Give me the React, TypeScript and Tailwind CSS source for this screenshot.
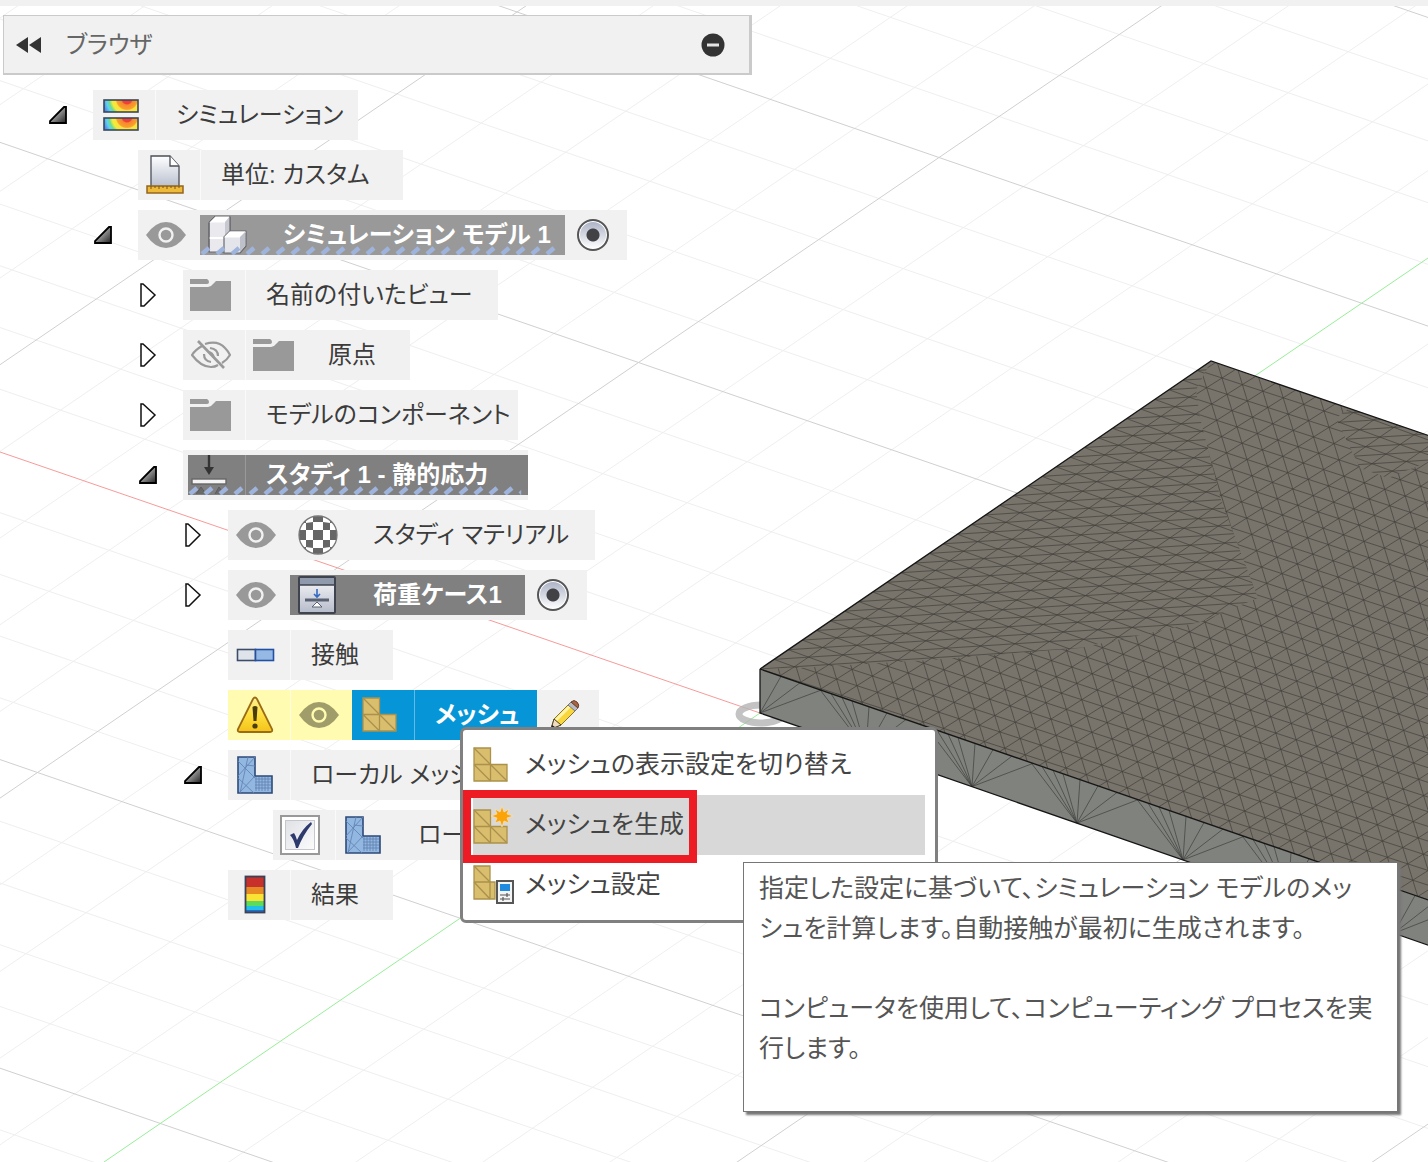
import React from 'react';
import { clsx } from 'clsx';

type Point = [number, number];

// Ground grid: origin of the model and the two cell vectors
const ORIGIN: Point = [760, 713];
const GRID_U: Point = [84.4, 29.1];
const GRID_V: Point = [60.1, -41];

const parallelLines = (
  origin: Point,
  dir: Point,
  step: Point,
  from: number,
  to: number,
  keep: (k: number) => boolean = () => true,
) => {
  let d = '';
  for (let k = from; k <= to; k++) {
    if (!keep(k)) continue;
    const x = origin[0] + step[0] * k;
    const y = origin[1] + step[1] * k;
    d += `M${(x - dir[0] * 80).toFixed(1)} ${(y - dir[1] * 80).toFixed(1)}L${(x + dir[0] * 80).toFixed(1)} ${(y + dir[1] * 80).toFixed(1)}`;
  }
  return d;
};

const triangleLattice = (origin: Point, a: Point, b: Point, diagonal: Point) =>
  parallelLines(origin, a, b, -80, 80) +
  parallelLines(origin, b, a, -80, 80) +
  parallelLines(origin, diagonal, a, -80, 80);

const isMajor = (k: number) => k % 5 === 0 && k !== 0;
const isMinor = (k: number) => k % 5 !== 0;

const minorGrid =
  parallelLines(ORIGIN, GRID_U, GRID_V, -30, 30, isMinor) + parallelLines(ORIGIN, GRID_V, GRID_U, -30, 30, isMinor);
const majorGrid =
  parallelLines(ORIGIN, GRID_U, GRID_V, -30, 30, isMajor) + parallelLines(ORIGIN, GRID_V, GRID_U, -30, 30, isMajor);

const regularMesh = triangleLattice([760, 669], [20.4, 6.6], [5, 16.3], [15.4, -9.7]);
const slantedMesh = triangleLattice([760, 669], [20.3, 7.4], [14.1, -9.63], [34.4, -2.23]);

const topEdgeY = (x: number) => 669 + (x - 760) * 0.3458;
const bottomEdgeY = (x: number) => 713 + (x - 760) * 0.3473;
const sideFans = [760, 866, 972, 1077, 1183, 1288, 1394]
  .map((x) =>
    [-46, -35, -24, -14, 3, 21, 40, 61]
      .filter((offset) => x + offset > 765)
      .map((offset) => `M${x} ${bottomEdgeY(x).toFixed(1)}L${x + offset} ${topEdgeY(x + offset).toFixed(1)}`)
      .join(''),
  )
  .join('');

const Viewport = () => (
  <svg className="absolute top-0 left-0" width="1920" height="1400" aria-hidden="true">
    <defs>
      <clipPath id="plate-top">
        <path d="M760 669L1211 361L1920 604L1920 1070Z" />
      </clipPath>
      <clipPath id="slanted">
        <path d="M760 669L1211 361L1196 390L1200 418L1221 500L1258 598L1200 622L1080 648L930 660L800 668Z M1336 418L1350 408L1428 436V462L1388 478L1360 468Z" />
      </clipPath>
      <clipPath id="regular">
        <path d="M760 669L800 668L930 660L1080 648L1200 622L1258 598L1221 500L1200 418L1196 390L1211 361L1350 408L1336 418L1360 468L1388 478L1428 462L1920 604V1070Z" />
      </clipPath>
    </defs>
    <path d={minorGrid} stroke="#efefef" strokeWidth="1" />
    <path d={majorGrid} stroke="#d0d0d0" strokeWidth="1" />
    <path d="M0 452L760 713" stroke="#f79a9a" strokeWidth="1" />
    <path d="M104 1162L760 713L1428 258L1920 -78" stroke="#98ee98" strokeWidth="1" fill="none" />
    <ellipse cx="761" cy="714" rx="22" ry="9" fill="none" stroke="#b4b4b4" strokeWidth="7" opacity="0.8" />

    <path d="M760 669V713L1920 1116V1070Z" fill="#80827e" />
    <path d={sideFans} stroke="#3d3f3c" strokeWidth="0.7" />
    <path d="M760 669L1211 361L1920 604L1920 1070Z" fill="#78746c" />
    <g clipPath="url(#plate-top)" stroke="#35332f" strokeWidth="0.7" opacity="0.8">
      <path d={regularMesh} clipPath="url(#regular)" />
      <path d={slantedMesh} clipPath="url(#slanted)" />
    </g>
    <path d="M760 669V713L1920 1116M760 669L1920 1070M760 669L1211 361L1920 604" fill="none" stroke="#161616" strokeWidth="1.3" />
  </svg>
);

/* ---------- icons ---------- */

const EyeIcon = ({ dark = false }: { dark?: boolean }) => (
  <svg width="40" height="28" viewBox="0 0 40 28">
    <path d="M0 14Q9 1 20 1T40 14Q31 27 20 27T0 14Z" fill={dark ? '#a09d6b' : '#999999'} />
    <circle cx="20" cy="14" r="6.5" fill="none" stroke={dark ? '#fffbb0' : '#f1f1f1'} strokeWidth="2.4" />
  </svg>
);

const HiddenEyeIcon = () => (
  <svg width="40" height="30" viewBox="0 0 40 30" fill="none" stroke="#999999" strokeWidth="2.2">
    <path d="M11 6Q4 10 1 15Q10 27 20 27Q24 27 27 25M14 4Q27 0 34 8Q37 11 39 15Q36 20 31 23" />
    <path d="M13 14Q13 21 20 22M19 8Q27 9 27 16" />
    <path d="M17 12Q22 12 23 18" strokeWidth="1.8" />
    <path d="M7 1L33 28" strokeWidth="2.6" />
  </svg>
);

const FolderIcon = () => (
  <svg width="42" height="34" viewBox="0 0 42 34" fill="#999999">
    <path d="M0 1H17Q19 2 19 4T17 6H0Z" />
    <path d="M0 9H18Q21 9 23 6L26 3H41V33H0Z" />
  </svg>
);

const SimulationIcon = () => (
  <svg width="36" height="32" viewBox="0 0 36 32">
    <defs>
      <radialGradient id="sim-heat" gradientUnits="userSpaceOnUse" cx="24" cy="0" r="24">
        <stop offset="0.2" stopColor="#ee4037" />
        <stop offset="0.25" stopColor="#f7882f" />
        <stop offset="0.43" stopColor="#f9a02c" />
        <stop offset="0.48" stopColor="#fbe33c" />
        <stop offset="0.62" stopColor="#f4ea3d" />
        <stop offset="0.74" stopColor="#6fdc8c" />
        <stop offset="0.85" stopColor="#5fd3f0" />
        <stop offset="1" stopColor="#4f8df0" />
      </radialGradient>
    </defs>
    <rect x="1" y="1" width="34" height="12" fill="url(#sim-heat)" stroke="#3c4658" strokeWidth="1.6" />
    <g transform="translate(0 18)">
      <rect x="1" y="1" width="34" height="12" fill="url(#sim-heat)" stroke="#3c4658" strokeWidth="1.6" />
    </g>
  </svg>
);

const UnitsIcon = () => (
  <svg width="38" height="40" viewBox="0 0 38 40">
    <defs>
      <linearGradient id="paper" x1="0" y1="0" x2="0" y2="1">
        <stop offset="0" stopColor="#ffffff" />
        <stop offset="1" stopColor="#b8bfce" />
      </linearGradient>
    </defs>
    <path d="M5 1H24L33 11V32H5Z" fill="url(#paper)" stroke="#4b5058" strokeWidth="1.3" />
    <path d="M24 1V11H33" fill="#fff" stroke="#4b5058" strokeWidth="1.3" />
    <rect x="1" y="31" width="36" height="7" fill="#edba3a" stroke="#94651c" strokeWidth="1.5" />
    <path d="M5 31V34M9 31V33M13 31V34M17 31V33M21 31V34M25 31V33M29 31V34M33 31V33" stroke="#7c5214" />
  </svg>
);

const CubesIcon = () => (
  <svg width="40" height="40" viewBox="0 0 40 40" stroke="#6a6a70" strokeWidth="1.2" strokeLinejoin="round">
    <path d="M1 7L7 1H22V31L17 37H1Z" fill="#e9e9ee" />
    <path d="M1 7L7 1H22L17 7Z" fill="#fff" stroke="#fff" />
    <path d="M17 7V37L22 31V1Z" fill="#c7c8d0" stroke="none" />
    <path d="M1 23H17" stroke="#fff" strokeWidth="2" />
    <path d="M1 37V7L7 1H22V18" fill="none" />
    <path d="M16 22L22 16H38V31L32 38H16Z" fill="#e4e5ea" />
    <path d="M17 22L22 17H37L32 22Z" fill="#fff" stroke="#fff" />
    <path d="M32 22V37L37 31V17Z" fill="#bfc1ca" stroke="none" />
  </svg>
);

const StaticStressIcon = () => (
  <svg width="38" height="40" viewBox="0 0 38 40">
    <path d="M19 0V14" stroke="#333" strokeWidth="2.4" />
    <path d="M14 12H24L19 20Z" fill="#333" />
    <rect x="2" y="24" width="34" height="5" fill="#f4f4f4" stroke="#666" strokeWidth="1.4" />
    <path d="M6 39L11 32L16 39M25 39L29 32L34 39" fill="#6a6a6a" stroke="#5c5c5c" />
  </svg>
);

const MaterialIcon = () => (
  <svg width="40" height="40" viewBox="0 0 40 40">
    <defs>
      <clipPath id="ball">
        <circle cx="20" cy="20" r="19" />
      </clipPath>
    </defs>
    <circle cx="20" cy="20" r="19" fill="#fff" />
    <g clipPath="url(#ball)" fill="#666666">
      <path d="M15 0H25V7H15ZM0 15H8V25H0ZM15 15H25V25H15ZM32 15H40V25H32ZM15 33H25V40H15Z" />
      <path d="M8 8L15 7V15H8ZM25 7L32 8V15H25ZM8 25H15V33L8 32ZM25 25H32V32L25 33Z" />
      <path d="M4 4H8V8H4ZM32 4H36V8H32ZM4 32H8V36H4ZM32 32H36V36H32Z" />
    </g>
    <circle cx="20" cy="20" r="19" fill="none" stroke="#777" strokeWidth="1.3" />
  </svg>
);

const LoadCaseIcon = () => (
  <svg width="38" height="38" viewBox="0 0 38 38">
    <defs>
      <linearGradient id="load" x1="0" y1="0" x2="0" y2="1">
        <stop offset="0" stopColor="#fafafc" />
        <stop offset="1" stopColor="#b5bbc9" />
      </linearGradient>
    </defs>
    <rect x="1" y="1" width="36" height="36" rx="1" fill="url(#load)" stroke="#3e434d" strokeWidth="2" />
    <rect x="2" y="2" width="34" height="7" fill="#8f9bad" />
    <path d="M2 9H36" stroke="#3e434d" strokeWidth="1.6" />
    <path d="M19 13V20M16 18L19 21L22 18" fill="none" stroke="#3568c0" strokeWidth="1.6" />
    <path d="M7 24H31" stroke="#596173" strokeWidth="3" />
    <path d="M19 26L24 31H14Z" fill="#fff" stroke="#596173" />
  </svg>
);

const ContactIcon = () => (
  <svg width="40" height="14" viewBox="0 0 40 14">
    <rect x="1.5" y="1.5" width="18" height="11" fill="#dfe4ea" stroke="#3c4d6c" strokeWidth="1.6" />
    <rect x="19.5" y="1.5" width="18" height="11" fill="#96b8e4" stroke="#2450a4" strokeWidth="1.6" />
  </svg>
);

const WarningIcon = () => (
  <svg width="38" height="38" viewBox="0 0 38 38">
    <defs>
      <linearGradient id="warn" x1="0" y1="0" x2="0" y2="1">
        <stop offset="0" stopColor="#fff09a" />
        <stop offset="0.5" stopColor="#ffdf3c" />
        <stop offset="1" stopColor="#f3c21a" />
      </linearGradient>
    </defs>
    <path d="M17 3Q19 0 21 3L36 33Q37 36 34 36H4Q1 36 2 33Z" fill="url(#warn)" stroke="#9a6b14" strokeWidth="1.8" />
    <path d="M16.5 11Q19 9 21.5 11L20.5 25H17.5Z" fill="#4a3d0c" />
    <circle cx="19" cy="30" r="2.6" fill="#4a3d0c" />
  </svg>
);

const MeshShape = () => (
  <g fill="#d8be6d" stroke="#ab914b" strokeWidth="1.3">
    <path d="M1 1H17.5V17.5H34V34H1Z" />
    <path d="M1 17.5H17.5V34M1 1L17.5 17.5L34 34M1 17.5L17.5 34" fill="none" />
  </g>
);

const MeshIcon = () => (
  <svg width="36" height="36" viewBox="0 0 36 36">
    <MeshShape />
  </svg>
);

const GenerateMeshIcon = () => (
  <svg width="40" height="38" viewBox="0 0 40 38">
    <g transform="translate(0 3)">
      <MeshShape />
    </g>
    <path
      d="M29 0L31 6L36 3L34 8L40 10L34 12L36 17L31 15L29 21L27 15L22 17L24 12L18 10L24 8L22 3L27 6Z"
      fill="#faa40a"
      stroke="#f6e3b8"
      strokeWidth="0.7"
    />
  </svg>
);

const MeshSettingsIcon = () => (
  <svg width="42" height="40" viewBox="0 0 42 40">
    <g fill="#d8be6d" stroke="#ab914b" strokeWidth="1.3">
      <path d="M1 1H17V17H22V34H1Z" />
      <path d="M1 17H17V34M1 1L17 17M1 17L17 34" fill="none" />
    </g>
    <rect x="24" y="16" width="16" height="22" fill="#f4f4f4" stroke="#565656" strokeWidth="2" />
    <rect x="27" y="19" width="10" height="7" fill="#1e8be0" />
    <path d="M27 30H37M27 34H37M34 28V32M30 32V36" stroke="#555" strokeWidth="1.2" />
  </svg>
);

const LocalMeshIcon = () => (
  <svg width="38" height="38" viewBox="0 0 38 38">
    <path d="M2 1H19V20H36V37H2Z" fill="#92b7e1" stroke="#2c4a78" strokeWidth="1.6" />
    <path d="M2 20L19 1M2 5L19 22M12 1L4 37M4 36L19 20M2 22L18 37M10 9L19 10" fill="none" stroke="#6486b5" strokeWidth="0.9" />
    <path d="M19 23H35M19 26H35M19 29H35M19 32H35M20 21V35M23 21V35M26 21V35M29 21V35M32 21V35" stroke="#5f80ad" strokeWidth="0.8" />
  </svg>
);

const PencilIcon = () => (
  <svg width="32" height="32" viewBox="0 0 32 32">
    <path d="M2 30L5 20L21 4L28 10L12 26Z" fill="#f8d63c" stroke="#8a7428" strokeWidth="1" />
    <path d="M7 21L22 6" stroke="#fff3a8" strokeWidth="3" />
    <path d="M19 6L22 3L29 9L26 12Z" fill="#b8bcc2" stroke="#777" />
    <path d="M22 3Q25 0 28 3T29 9Z" fill="#a76545" stroke="#6e3f28" />
    <path d="M2 30L5 20L12 26Z" fill="#f0dcc0" stroke="#4f4222" />
    <path d="M2 30L3 26L6 28Z" fill="#222" />
  </svg>
);

const ResultIcon = () => (
  <svg width="22" height="40" viewBox="0 0 22 40">
    <rect x="1" y="1" width="20" height="11" fill="#c8302c" />
    <rect x="1" y="12" width="20" height="7" fill="#e78a23" />
    <rect x="1" y="19" width="20" height="7" fill="#fbe334" />
    <rect x="1" y="26" width="20" height="5" fill="#5ddc5c" />
    <rect x="1" y="31" width="20" height="4" fill="#1fc0ec" />
    <rect x="1" y="35" width="20" height="3" fill="#2b6cc0" />
    <rect x="1.5" y="1.5" width="19" height="36" fill="none" stroke="#3b4258" strokeWidth="1.8" />
  </svg>
);

const Twisty = ({ open }: { open: boolean }) =>
  open ? (
    <svg width="20" height="20" viewBox="0 0 20 20">
      <defs>
        <linearGradient id="twisty" x1="0" y1="0" x2="1" y2="1">
          <stop offset="0.3" stopColor="#b4b4b4" />
          <stop offset="1" stopColor="#222222" />
        </linearGradient>
      </defs>
      <path d="M2 18V16L16 2H18V18Z" fill="url(#twisty)" stroke="#000" strokeWidth="1.8" />
    </svg>
  ) : (
    <svg width="20" height="26" viewBox="0 0 20 26">
      <path d="M3 2H5L17 13L6 24H3Z" fill="#fff" stroke="#111" strokeWidth="1.5" />
    </svg>
  );

/* Blue diagonal dashes that run under an active node */
const Hatch = () => (
  <svg className="absolute bottom-0 left-0 h-[9px] w-full" aria-hidden="true">
    <defs>
      <pattern id="hatch" width="15" height="9" patternUnits="userSpaceOnUse">
        <path d="M2 8L9 2" stroke="#9fb4dc" strokeWidth="4.4" />
      </pattern>
    </defs>
    <rect width="98%" height="9" fill="url(#hatch)" />
  </svg>
);

/* ---------- tree ---------- */

const INDENT = ['pl-12', 'pl-[93px]', 'pl-[138px]', 'pl-[183px]', 'pl-[228px]'];

interface RowProps {
  level: number;
  open?: boolean;
  children: React.ReactNode;
}

const Row: React.FC<RowProps> = ({ level, open, children }) => (
  <li className={clsx('flex h-[50px]', INDENT[level])} role="treeitem" aria-selected={false} aria-expanded={open}>
    {open === undefined ? (
      <span className="w-[45px] shrink-0" />
    ) : (
      <button type="button" aria-label={open ? '折りたたむ' : '展開'} className="flex w-[45px] shrink-0 items-center">
        <Twisty open={open} />
      </button>
    )}
    <div className="flex bg-[#f1f1f1]">{children}</div>
  </li>
);

const Cell = ({ className = 'pl-2', children }: { className?: string; children: React.ReactNode }) => (
  <span className={clsx('flex w-[62px] shrink-0 items-center', className)}>{children}</span>
);

const EyeButton = ({ label, dark }: { label: string; dark?: boolean }) => (
  <button
    type="button"
    aria-label={label}
    className={clsx('flex w-[62px] shrink-0 items-center pl-2', dark && 'border-l border-[#fffde0] bg-[#fffbb0]')}
  >
    <EyeIcon dark={dark} />
  </button>
);

const Label = ({ className, children }: { className?: string; children: React.ReactNode }) => (
  <span className={clsx('flex items-center border-l pl-5 whitespace-nowrap', className)}>{children}</span>
);

const Radio = ({ label }: { label: string }) => (
  <span className="flex w-[62px] items-center pl-3">
    <input
      type="radio"
      aria-label={label}
      defaultChecked
      className="size-8 appearance-none rounded-full border-2 border-[#555] bg-[radial-gradient(circle,#414146_0_6px,transparent_7px),linear-gradient(#aab1c4,#ffffff)] shadow-[inset_0_0_0_1px_#ffffff]"
    />
  </span>
);

const Tree = () => (
  <ul role="tree" className="mt-[15px] flex flex-col gap-2.5">
    <Row level={0} open>
      <Cell className="pl-2.5"><SimulationIcon /></Cell>
      <Label className="w-[203px] border-[#fafafa]">シミュレーション</Label>
    </Row>
    <Row level={1}>
      <Cell><UnitsIcon /></Cell>
      <Label className="w-[203px] border-[#fafafa]">単位: カスタム</Label>
    </Row>
    <Row level={1} open>
      <EyeButton label="シミュレーション モデル 1 の表示" />
      <div className="relative my-[5px] flex bg-[#999999] font-bold text-white">
        <Cell><CubesIcon /></Cell>
        <Label className="w-[303px] border-transparent">シミュレーション モデル 1</Label>
        <Hatch />
      </div>
      <Radio label="シミュレーション モデル 1 をアクティブ化" />
    </Row>
    <Row level={2} open={false}>
      <Cell className="pl-[7px]"><FolderIcon /></Cell>
      <Label className="w-[253px] border-[#fafafa]">名前の付いたビュー</Label>
    </Row>
    <Row level={2} open={false}>
      <button type="button" aria-label="原点の表示" className="flex w-[62px] items-center pl-2">
        <HiddenEyeIcon />
      </button>
      <Cell className="border-l border-[#fafafa] pl-[7px]"><FolderIcon /></Cell>
      <Label className="w-[103px] border-transparent">原点</Label>
    </Row>
    <Row level={2} open={false}>
      <Cell className="pl-[7px]"><FolderIcon /></Cell>
      <Label className="w-[273px] border-[#fafafa]">モデルのコンポーネント</Label>
    </Row>
    <Row level={2} open>
      <div className="relative my-[5px] ml-[5px] flex bg-[#808080] font-bold text-white">
        <span className="flex w-[57px] items-center pl-0.5"><StaticStressIcon /></span>
        <Label className="w-[283px] border-[#999999]">スタディ 1 - 静的応力</Label>
        <Hatch />
      </div>
    </Row>
    <Row level={3} open={false}>
      <EyeButton label="スタディ マテリアルの表示" />
      <Cell><MaterialIcon /></Cell>
      <Label className="w-[243px] border-transparent">スタディ マテリアル</Label>
    </Row>
    <Row level={3} open={false}>
      <EyeButton label="荷重ケース1の表示" />
      <div className="my-[5px] flex bg-[#808080] font-bold text-white">
        <Cell><LoadCaseIcon /></Cell>
        <Label className="w-[173px] border-transparent">荷重ケース1</Label>
      </div>
      <Radio label="荷重ケース1をアクティブ化" />
    </Row>
    <Row level={3}>
      <Cell><ContactIcon /></Cell>
      <Label className="w-[103px] border-[#fafafa]">接触</Label>
    </Row>
    <Row level={3}>
      <Cell className="bg-[#fffbb0] pl-2"><WarningIcon /></Cell>
      <EyeButton label="メッシュの表示" dark />
      <div className="flex bg-[#0696d7] font-bold text-white">
        <Cell className="pl-2.5"><MeshIcon /></Cell>
        <Label className="w-[123px] border-[#5fbce8]">メッシュ</Label>
      </div>
      <button type="button" aria-label="メッシュを編集" className="flex w-[62px] items-center pl-3">
        <PencilIcon />
      </button>
    </Row>
    <Row level={3} open>
      <Cell><LocalMeshIcon /></Cell>
      <Label className="w-[203px] border-[#fafafa]">ローカル メッシュ</Label>
    </Row>
    <Row level={4}>
      <span className="relative flex w-[62px] items-center pl-[7px]">
        <input
          id="local-mesh"
          type="checkbox"
          defaultChecked
          className="size-10 appearance-none border-2 border-[#999999] bg-linear-to-br from-[#dcdee2] to-white shadow-[inset_0_0_0_3px_#ffffff,inset_0_0_0_4px_#c5c7cc]"
        />
        <svg className="pointer-events-none absolute left-4" width="24" height="28" viewBox="0 0 24 28">
          <path d="M1 14L5 12Q7 15 8 19Q13 8 22 1L23 3Q14 14 9 27H7Q5 18 1 14Z" fill="#2d3a6e" />
        </svg>
      </span>
      <Cell className="border-l border-[#fafafa] pl-2"><LocalMeshIcon /></Cell>
      <label htmlFor="local-mesh" className="flex w-[123px] items-center pl-[21px] whitespace-nowrap">ローカル</label>
    </Row>
    <Row level={3}>
      <Cell className="pl-4"><ResultIcon /></Cell>
      <Label className="w-[103px] border-[#fafafa]">結果</Label>
    </Row>
  </ul>
);

const menuItems = [
  { label: 'メッシュの表示設定を切り替え', icon: <MeshIcon />, active: false },
  { label: 'メッシュを生成', icon: <GenerateMeshIcon />, active: true },
  { label: 'メッシュ設定', icon: <MeshSettingsIcon />, active: false },
];

const ContextMenu = () => (
  <div role="menu" className="absolute top-[727px] left-[460px] w-[478px] rounded-md border-3 border-[#808080] bg-white px-2.5 py-[5px] text-[25px] text-[#444444]">
    {menuItems.map((item) => (
      <button
        key={item.label}
        type="button"
        role="menuitem"
        className={clsx('flex h-[60px] w-full items-center text-left whitespace-nowrap', item.active && 'bg-[#d8d8d8]')}
      >
        <span className="flex w-[52px] shrink-0">{item.icon}</span>
        {item.label}
      </button>
    ))}
    <div className="pointer-events-none absolute top-[60px] left-0 h-[73px] w-[234px] border-8 border-[#ed1c24]" />
  </div>
);

const Tooltip = () => (
  <div role="tooltip" className="absolute top-[862px] left-[743px] h-[250px] w-[655px] border border-[#767676] bg-white px-[15px] py-[5px] text-[25px] leading-10 text-[#555555] shadow-[3px_3px_2px_#777777]">
    <p className="whitespace-nowrap">指定した設定に基づいて、シミュレーション モデルのメッ<br />シュを計算します。自動接触が最初に生成されます。</p>
    <p className="mt-10 whitespace-nowrap">コンピュータを使用して、コンピューティング プロセスを実<br />行します。</p>
  </div>
);

export default function App() {
  return (
    <main className="relative min-h-screen overflow-hidden bg-white font-['Liberation_Sans','Noto_Sans_CJK_JP',sans-serif] text-[24px] text-[#3c3c3c] [font-feature-settings:'palt']">
      <Viewport />
      <div className="relative">
        <div className="h-1.5 bg-[#f1f1f1]" />
        <header className="mt-[9px] ml-[3px] flex h-[60px] max-w-[749px] items-center border border-r-3 border-b-2 border-[#cacaca] bg-[#f1f1f1] pr-6 pl-3 text-[#666666]">
          <button type="button" aria-label="パネルを閉じる">
            <svg width="26" height="16" viewBox="0 0 26 16" fill="#333333">
              <path d="M0 8L12 0V16ZM13 8L25 0V16Z" />
            </svg>
          </button>
          <h1 className="ml-6">ブラウザ</h1>
          <button type="button" aria-label="最小化" className="ml-auto">
            <svg width="24" height="24" viewBox="0 0 24 24">
              <circle cx="12" cy="12" r="11.5" fill="#333333" />
              <path d="M6 12H18" stroke="#e4e4e4" strokeWidth="3" />
            </svg>
          </button>
        </header>
        <Tree />
      </div>
      <ContextMenu />
      <Tooltip />
    </main>
  );
}
